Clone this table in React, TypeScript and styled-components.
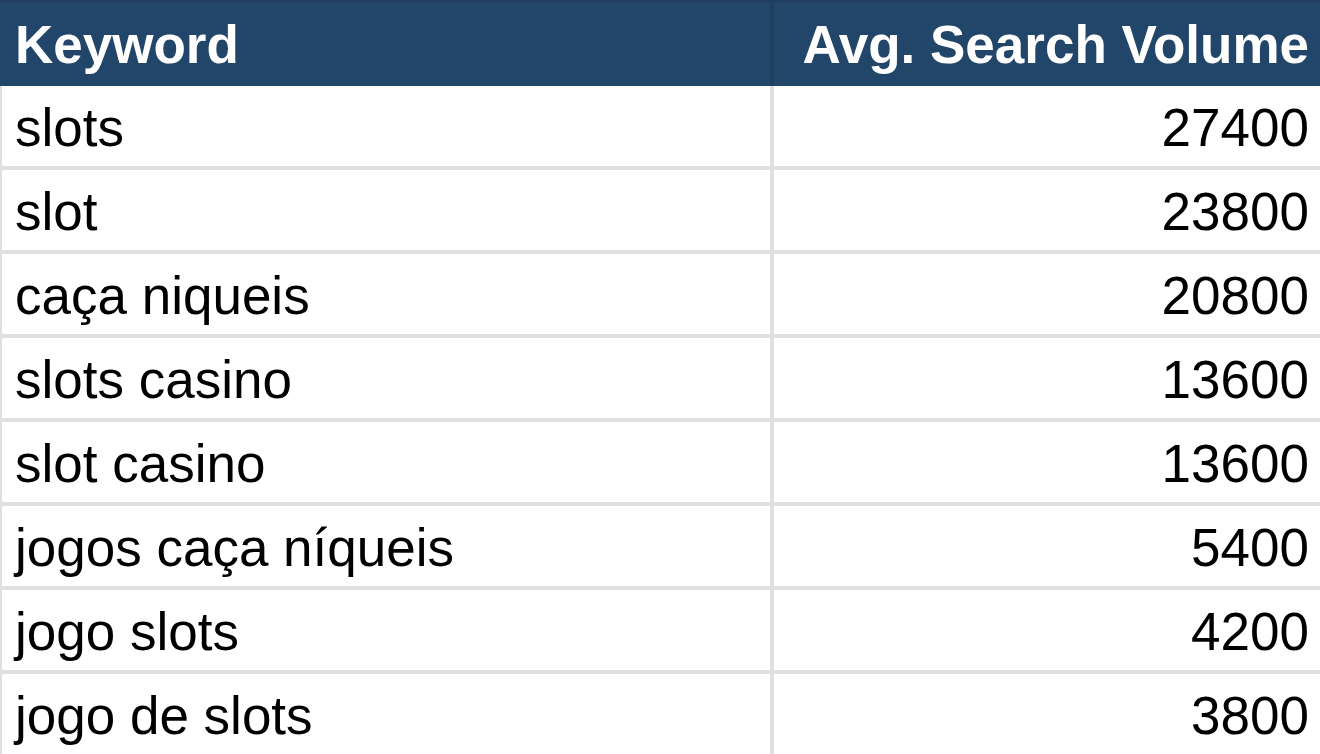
import React from "react";
import styled, { createGlobalStyle } from "styled-components";

const GlobalStyle = createGlobalStyle`
  html, body {
    margin: 0;
    padding: 0;
    background: #ffffff;
  }
  body {
    font-family: "Liberation Sans", Arial, sans-serif;
  }
`;

const Table = styled.div`
  width: 1320px;
  display: flex;
  flex-direction: column;
  font-family: "Liberation Sans", Arial, sans-serif;
  font-size: 53px;
`;

const HeaderRow = styled.div`
  display: grid;
  grid-template-columns: 770px 4px 1fr;
  height: 86px;
  background: #22456a;
  border-top: 2px solid #1f3e60;
  box-sizing: border-box;
`;

const HeaderCell = styled.div<{ $align?: "left" | "right" }>`
  display: flex;
  align-items: center;
  justify-content: ${(p) => (p.$align === "right" ? "flex-end" : "flex-start")};
  padding: ${(p) => (p.$align === "right" ? "0 11px 0 0" : "0 0 0 15px")};
  color: #ffffff;
  font-weight: 700;
  line-height: 1;
  white-space: nowrap;
`;

const HeaderDivider = styled.div`
  background: #1f3f61;
`;

const Body = styled.div`
  display: grid;
  grid-template-columns: 768px 1fr;
  column-gap: 4px;
  row-gap: 4px;
  padding-left: 2px;
  background: #e0e0e0;
`;

const Cell = styled.div<{ $align?: "left" | "right" }>`
  display: flex;
  align-items: center;
  justify-content: ${(p) => (p.$align === "right" ? "flex-end" : "flex-start")};
  height: 80px;
  box-sizing: border-box;
  padding: ${(p) => (p.$align === "right" ? "3px 11px 0 0" : "3px 0 0 13px")};
  background: #ffffff;
  color: #000000;
  line-height: 1;
  white-space: nowrap;
`;

const rows: [string, number][] = [
  ["slots", 27400],
  ["slot", 23800],
  ["caça niqueis", 20800],
  ["slots casino", 13600],
  ["slot casino", 13600],
  ["jogos caça níqueis", 5400],
  ["jogo slots", 4200],
  ["jogo de slots", 3800],
];

export default function App() {
  return (
    <>
      <GlobalStyle />
      <Table>
        <HeaderRow>
          <HeaderCell>Keyword</HeaderCell>
          <HeaderDivider />
          <HeaderCell $align="right">Avg. Search Volume</HeaderCell>
        </HeaderRow>
        <Body>
          {rows.map(([k, v]) => (
            <React.Fragment key={k}>
              <Cell>{k}</Cell>
              <Cell $align="right">{v}</Cell>
            </React.Fragment>
          ))}
        </Body>
      </Table>
    </>
  );
}
